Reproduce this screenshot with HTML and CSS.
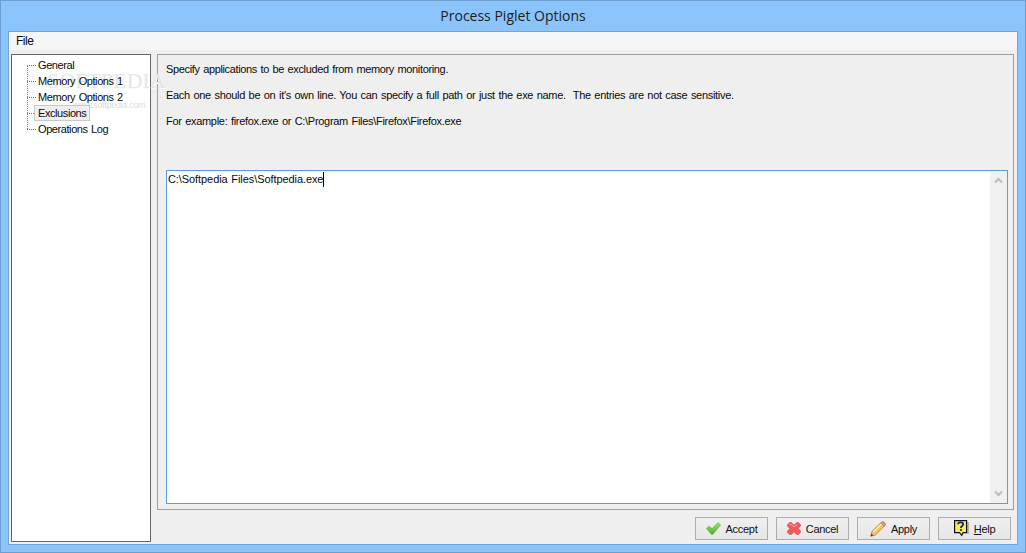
FILE: index.html
```html
<!DOCTYPE html>
<html lang="en">
<head>
<meta charset="utf-8">
<title>Process Piglet Options</title>
<link rel="stylesheet" href="styles.css">
</head>
<body>
<div class="window">
  <header class="titlebar">Process Piglet Options</header>
  <div class="client">
    <nav class="menubar"><span class="menu-item">File</span></nav>
    <div class="content">
      <aside class="tree">
        <div class="watermark">SOFTPEDIA</div>
        <div class="watermark-sub">www.softpedia.com</div>
        <ul class="tree-list">
          <li class="tree-item"><span class="tree-label">General</span></li>
          <li class="tree-item"><span class="tree-label">Memory Options 1</span></li>
          <li class="tree-item"><span class="tree-label">Memory Options 2</span></li>
          <li class="tree-item"><span class="tree-label selected">Exclusions</span></li>
          <li class="tree-item"><span class="tree-label">Operations Log</span></li>
        </ul>
      </aside>
      <div class="main">
        <section class="panel">
          <p class="note note-tight">Specify applications to be excluded from memory monitoring.</p>
          <p class="note">Each one should be on it's own line. You can specify a full path or just the exe name.&nbsp; The entries are not case sensitive.</p>
          <p class="note">For example: firefox.exe or C:\Program Files\Firefox\Firefox.exe</p>
          <div class="editor">
            <div class="editor-text"><span class="typed">C:\Softpedia Files\Softpedia.exe</span></div>
            <div class="scrollbar">
              <svg class="arrow" width="9" height="7" viewBox="0 0 9 7"><path d="M1 5.500 4.500 2 8 5.500" fill="none" stroke="#bcbcbc" stroke-width="2"/></svg>
              <svg class="arrow" width="9" height="7" viewBox="0 0 9 7"><path d="M1 1.500 4.500 5 8 1.500" fill="none" stroke="#bcbcbc" stroke-width="2"/></svg>
            </div>
          </div>
        </section>
        <footer class="actions">
          <button class="btn" type="button">
            <svg class="icon" width="15" height="13" viewBox="0 0 15 13"><defs><linearGradient id="ok" x1="0" y1="0" x2="0" y2="1"><stop offset="0" stop-color="#a6e36c"/><stop offset="1" stop-color="#4fae34"/></linearGradient></defs><path d="M.5 6.500 3.200 4.300 6 6.800 12 .7 14.500 3 6.800 12.300H5.400Z" fill="url(#ok)" stroke="#58a83c" stroke-width=".7"/></svg>
            <span>Accept</span>
          </button>
          <button class="btn" type="button">
            <svg class="icon" width="14" height="13" viewBox="0 0 14 13"><path d="M.6 2.600 2.600.6H4.400L7 3.200 9.600.6H11.400L13.400 2.600V4.200L11 6.500 13.400 8.800V10.400L11.400 12.400H9.600L7 9.800 4.400 12.400H2.600L.6 10.400V8.800L3 6.500.6 4.200Z" fill="#f2595e" stroke="#dc464d" stroke-width=".7"/><path d="M2.500 2.500 4 2.200 7 5 10 2.200" fill="none" stroke="#ffa4a6" stroke-width="1"/></svg>
            <span>Cancel</span>
          </button>
          <button class="btn" type="button">
            <svg class="icon" width="16" height="16" viewBox="0 0 16 16"><path d="M.7 15.300 1.900 10.500 10.800 1.800 14.200 5.200 5.300 14Z" fill="#f4c55c" stroke="#96763a" stroke-width=".7"/><path d="M10.800 1.800 12 .7H13.500L15.300 2.500V4.100L14.200 5.200Z" fill="#ee8a8c" stroke="#b06a6a" stroke-width=".7"/><path d="M.7 15.300 1.400 12.600 3.400 14.500Z" fill="#444"/><path d="M3.300 11 11.500 3" stroke="#fff2bd" stroke-width="1.100"/></svg>
            <span>Apply</span>
          </button>
          <button class="btn" type="button">
            <svg class="icon" width="15" height="17" viewBox="0 0 15 17"><path d="M.6.600H12.600V12.600H9L7.800 15.400 5.500 12.600H.6Z" fill="#f6ee58" stroke="#111" stroke-width="1.200"/><path d="M14 2V14" stroke="#777"/><path d="M4 4.300C4 3 5.200 2.300 6.600 2.300S9.200 3 9.200 4.300C9.200 6 6.900 6 6.900 7.900" fill="none" stroke="#1a1a8c" stroke-width="1.700"/><rect x="6" y="9" width="1.800" height="1.800" fill="#1a1a8c"/></svg>
            <span><u>H</u>elp</span>
          </button>
        </footer>
      </div>
    </div>
  </div>
</div>
</body>
</html>
```
FILE: styles.css
```css
* { box-sizing: border-box; }
html, body { margin: 0; height: 100%; }
body {
  font-family: "Liberation Sans", Arial, sans-serif;
  font-size: 11px;
  letter-spacing: -.3px;
  word-spacing: .8px;
  color: #0a0a0a;
  overflow: hidden;
}
.window {
  width: 1026px;
  height: 553px;
  display: flex;
  flex-direction: column;
  padding: 0 7px 7px;
  background: #8bc4fb;
  border: 1px solid #6c9fd0;
}
.titlebar {
  height: 30px;
  flex: none;
  display: flex;
  align-items: center;
  justify-content: center;
  padding-bottom: 2px;
  font-family: "Open Sans", sans-serif;
  font-size: 14px;
  letter-spacing: 0;
  word-spacing: 0;
  color: #1c1c1c;
}
.client {
  flex: 1;
  display: flex;
  flex-direction: column;
  background: #efefef;
  border: 1px solid #72a6da;
  min-height: 0;
}
.menubar {
  height: 18px;
  flex: none;
  display: flex;
  align-items: center;
  padding-left: 7px;
  background: #f5f6f7;
  font-size: 12px;
  letter-spacing: -.5px;
}
.content {
  flex: 1;
  display: flex;
  gap: 6px;
  padding: 4px 3px 2px 2px;
  min-height: 0;
}
.tree {
  position: relative;
  width: 140px;
  flex: none;
  background: #fff;
  border: 1px solid #666;
}
.tree-list {
  list-style: none;
  margin: 0;
  padding: 2px 0 0;
  position: relative;
  letter-spacing: -.42px;
}
.tree-list::before {
  content: "";
  position: absolute;
  left: 15px;
  top: 10px;
  height: 64px;
  border-left: 1px dotted #777;
}
.tree-item {
  height: 16px;
  display: flex;
  align-items: center;
  padding-left: 22px;
  position: relative;
  white-space: nowrap;
}
.tree-item::before {
  content: "";
  position: absolute;
  left: 15px;
  top: 8px;
  width: 9px;
  border-top: 1px dotted #777;
}
.tree-label {
  position: relative;
  padding: 0 4px;
  line-height: 16px;
}
.tree-label.selected {
  background: #efefef;
  border: 1px solid #c8c8c8;
  line-height: 14px;
  height: 16px;
  padding: 0 3px;
}
.watermark {
  position: absolute;
  left: 35px;
  top: 13px;
  font-size: 22px;
  letter-spacing: 0;
  color: #e6e6e6;
  text-shadow: 1px 1px 0 #fafafa;
  font-family: "Liberation Serif", serif;
  white-space: nowrap;
}
.watermark-sub {
  position: absolute;
  left: 61px;
  top: 45px;
  font-size: 9px;
  letter-spacing: -.3px;
  color: #dcdcdc;
  white-space: nowrap;
}
.main {
  flex: 1;
  display: flex;
  flex-direction: column;
  min-width: 0;
}
.panel {
  flex: 1;
  display: flex;
  flex-direction: column;
  border: 1px solid #a0a0a0;
  padding: 8px 5px 5px 8px;
  min-height: 0;
}
.note {
  margin: 0 0 13px;
  line-height: 13px;
  white-space: nowrap;
}
.note-tight { letter-spacing: -.35px; }
.editor {
  flex: 1;
  margin-top: 29px;
  display: flex;
  background: #fff;
  border: 1px solid #569de5;
  min-height: 0;
}
.editor-text {
  flex: 1;
  padding: 1px;
  line-height: 15px;
  letter-spacing: -.08px;
}
.typed {
  border-right: 1px solid #000;
  display: inline-block;
  line-height: 15px;
}
.scrollbar {
  width: 17px;
  flex: none;
  display: flex;
  flex-direction: column;
  justify-content: space-between;
  align-items: center;
  padding: 6px 0;
  background: #f0f0f0;
}
.arrow { display: block; }
.actions {
  flex: none;
  height: 32px;
  display: flex;
  justify-content: flex-end;
  align-items: flex-start;
  gap: 8px;
  padding: 7px 3px 0 0;
}
.btn {
  width: 73px;
  height: 23px;
  display: flex;
  align-items: center;
  justify-content: center;
  gap: 5px;
  padding: 0;
  font: inherit;
  letter-spacing: inherit;
  color: #111;
  background: linear-gradient(#f0f0f0, #e6e6e6);
  border: 1px solid #adadad;
}
.icon { display: block; flex: none; }
```
